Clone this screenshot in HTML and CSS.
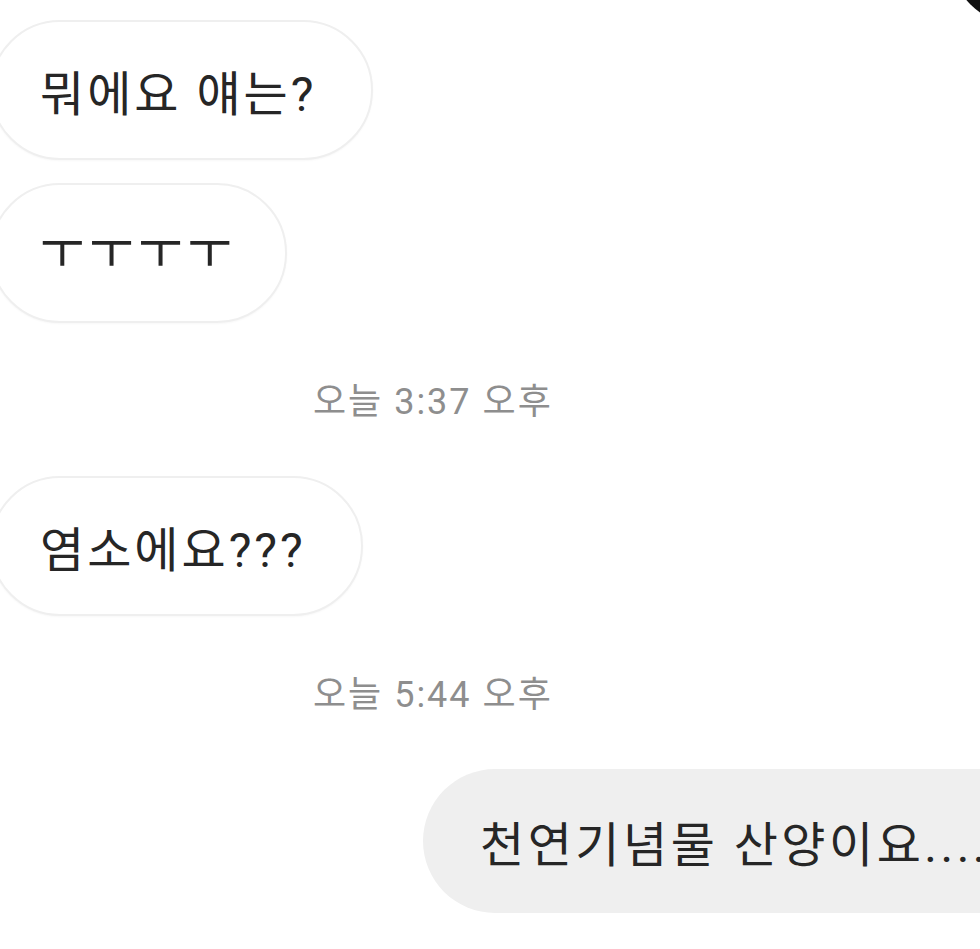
FILE: index.html
```html
<!DOCTYPE html>
<html lang="ko">
<head>
    <meta charset="UTF-8">
    <meta name="viewport" content="width=device-width, initial-scale=1.0">
    <title>채팅</title>
    <link rel="stylesheet" href="styles.css">
</head>
<body>

<div class="avatar"></div>

<div id="chat">
    <div class="bubble received first">뭐에요 얘는?</div>
    <div class="bubble received tight"><span class="jamo">ㅜㅜㅜㅜ</span></div>

    <div class="time">오늘 3:37 오후</div>
    <div class="bubble received">염소에요???</div>

    <div class="time">오늘 5:44 오후</div>
    <div class="bubble sent">천연기념물 산양이요.....</div>
</div>

</body>
</html>
```

FILE: styles.css
```css
html, body {
    margin: 0;
    padding: 0;
    background: #ffffff;
    overflow: hidden;
}
body {
    width: 980px;
    height: 949px;
    position: relative;
    font-family: Roboto, "Noto Sans CJK KR", sans-serif;
    color: #262626;
}
.avatar {
    position: absolute;
    top: -115px;
    right: -110px;
    width: 140px;
    height: 140px;
    border-radius: 50%;
    background: #111111;
}
#chat {
    display: flex;
    flex-direction: column;
    align-items: flex-start;
    padding-top: 20px;
}
.bubble {
    box-sizing: border-box;
    height: 140px;
    display: flex;
    align-items: center;
    border-radius: 70px;
    font-size: 48px;
    letter-spacing: 3px;
    white-space: nowrap;
    margin-top: 54px;
}
.bubble.first {
    margin-top: 0;
}
.bubble.tight {
    margin-top: 23px;
}
.received {
    margin-left: -10px;
    padding: 0 55px 0 48px;
    background: #ffffff;
    border: 2px solid #efefef;
    box-shadow: 0 1px 2px rgba(0, 0, 0, 0.03);
}
.jamo {
    display: inline-block;
    transform: scaleY(1.12);
    transform-origin: 50% 80%;
    position: relative;
    top: -5px;
    letter-spacing: 5px;
    margin-right: -7px;
}
.sent {
    margin-left: 423px;
    padding: 0 60px 0 57px;
    height: 144px;
    border-radius: 72px;
    letter-spacing: 3.5px;
    background: #efefef;
}
.time {
    margin-top: 59px;
    margin-left: 313px;
    height: 40px;
    line-height: 40px;
    font-size: 36px;
    letter-spacing: 2px;
    color: #8e8e8e;
}
.time + .bubble {
    margin-top: 54px;
}
```
